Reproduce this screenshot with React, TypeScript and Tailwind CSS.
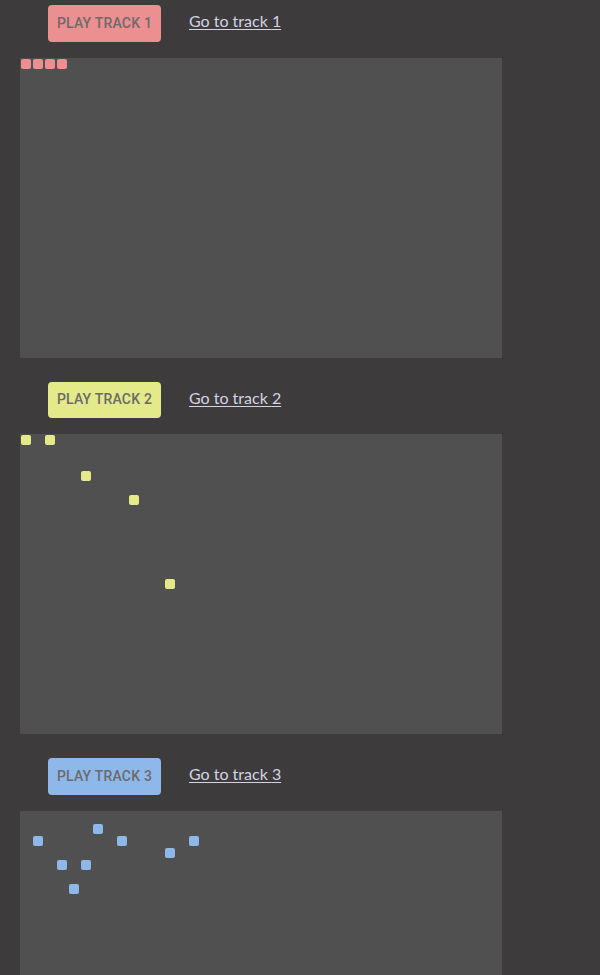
type Track = {
  id: number;
  button: string;
  dots: [number, number][];
};

const tracks: Track[] = [
  {
    id: 1,
    button: "bg-[#ec8f90]",
    dots: [
      [0, 0],
      [1, 0],
      [2, 0],
      [3, 0],
    ],
  },
  {
    id: 2,
    button: "bg-[#e4e98a]",
    dots: [
      [0, 0],
      [2, 0],
      [5, 3],
      [9, 5],
      [12, 12],
    ],
  },
  {
    id: 3,
    button: "bg-[#8fb8ea]",
    dots: [
      [1, 2],
      [6, 1],
      [8, 2],
      [3, 4],
      [5, 4],
      [4, 6],
      [12, 3],
      [14, 2],
    ],
  },
];

function Board({ track }: { track: Track }) {
  return (
    <div className="relative w-[482px] h-[300px] bg-[#505050] ml-5 overflow-hidden">
      {track.dots.map(([c, r], i) => (
        <span
          key={i}
          className={`absolute w-[10px] h-[10px] rounded-[2px] ${track.button}`}
          style={{ left: 1 + c * 12, top: 1 + r * 12 }}
        />
      ))}
    </div>
  );
}

export default function App() {
  return (
    <div className="min-h-[975px] bg-[#3d3b3c] pt-[5px]">
      {tracks.map((t) => (
        <section key={t.id} className="mb-6">
          <div className="flex items-center h-[36.5px] mb-4 pl-12">
            <button
              className={`h-[36.5px] w-[113px] rounded-[4px] text-[14px] font-medium text-[#6b6b6b] tracking-[0.2px] ${t.button}`}
              style={{ fontFamily: "Roboto, 'Liberation Sans', sans-serif" }}
            >
              PLAY TRACK {t.id}
            </button>
            <a
              href="#"
              className="ml-7 mb-[4px] text-[16px] text-[#d3d3e3] underline underline-offset-2"
              style={{ fontFamily: "Lato, 'Open Sans', sans-serif" }}
            >
              Go to track {t.id}
            </a>
          </div>
          <Board track={t} />
        </section>
      ))}
    </div>
  );
}
